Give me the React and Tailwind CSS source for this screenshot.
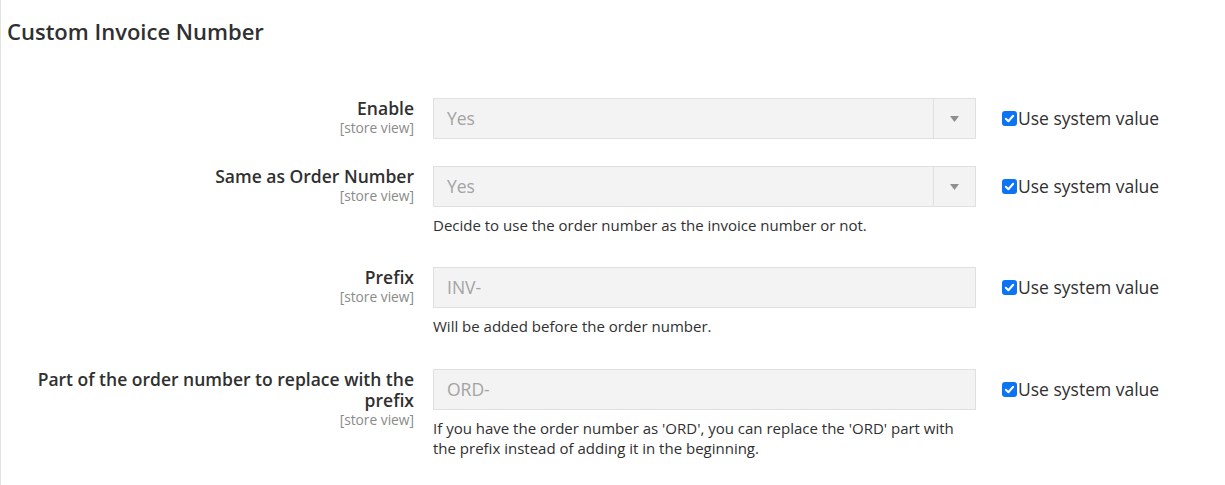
const rows = [
  { label: "Enable", value: "Yes", select: true },
  {
    label: "Same as Order Number",
    value: "Yes",
    select: true,
    note: "Decide to use the order number as the invoice number or not.",
  },
  { label: "Prefix", value: "INV-", note: "Will be added before the order number." },
  {
    label: "Part of the order number to replace with the prefix",
    value: "ORD-",
    note: "If you have the order number as 'ORD', you can replace the 'ORD' part with the prefix instead of adding it in the beginning.",
  },
];

const CheckIcon = () => (
  <span className="w-[15px] h-[15px] rounded-[3px] bg-[#0b74f5] flex items-center justify-center shrink-0">
    <svg width="11" height="11" viewBox="0 0 12 12" fill="none">
      <path d="M2 6.3L4.8 9L10 3" stroke="white" strokeWidth="2.2" strokeLinecap="round" strokeLinejoin="round" />
    </svg>
  </span>
);

const Row = ({ row, className }) => (
  <div className={`flex items-start ${className}`}>
    <div className="w-[413px] text-right">
      <div className="text-[17.5px] leading-[21px] font-semibold text-[#303030]">{row.label}</div>
      <div className="text-[13.75px] leading-[17px] text-[#8a8a8a]">[store view]</div>
    </div>
    <div className="ml-[19px] w-[543px]">
      <div className="h-[41px] flex items-stretch bg-[#f3f3f3] border border-[#e0e0e0]">
        <div className="flex-1 flex items-center pl-[13px] text-[17.5px] text-[#a3a3a3]">{row.value}</div>
        {row.select && (
          <div className="w-[42px] border-l border-[#e0e0e0] flex items-center justify-center">
            <svg width="9" height="6" viewBox="0 0 9 6">
              <path d="M0 0H9L4.5 6Z" fill="#8f8f8f" />
            </svg>
          </div>
        )}
      </div>
      {row.note && (
        <p className="mt-[8px] text-[15px] leading-[20px] text-[#303030]">{row.note}</p>
      )}
    </div>
    <div className="ml-[26px] h-[41px] flex items-center gap-[1px]">
      <CheckIcon />
      <span className="text-[17.5px] text-[#303030]">Use system value</span>
    </div>
  </div>
);

export default function App() {
  return (
    <div
      className="h-[485px] bg-white border-l border-[#e3e3e3] overflow-hidden"
      style={{ fontFamily: "'Open Sans', 'Liberation Sans', sans-serif" }}
    >
      <h2 className="pt-[18px] pl-[6px] text-[22px] leading-[26px] font-semibold text-[#303030]">
        Custom Invoice Number
      </h2>
      <div className="mt-[54px]">
        <Row row={rows[0]} className="mb-[27px]" />
        <Row row={rows[1]} className="mb-[32px]" />
        <Row row={rows[2]} className="mb-[33px]" />
        <Row row={rows[3]} />
      </div>
    </div>
  );
}
